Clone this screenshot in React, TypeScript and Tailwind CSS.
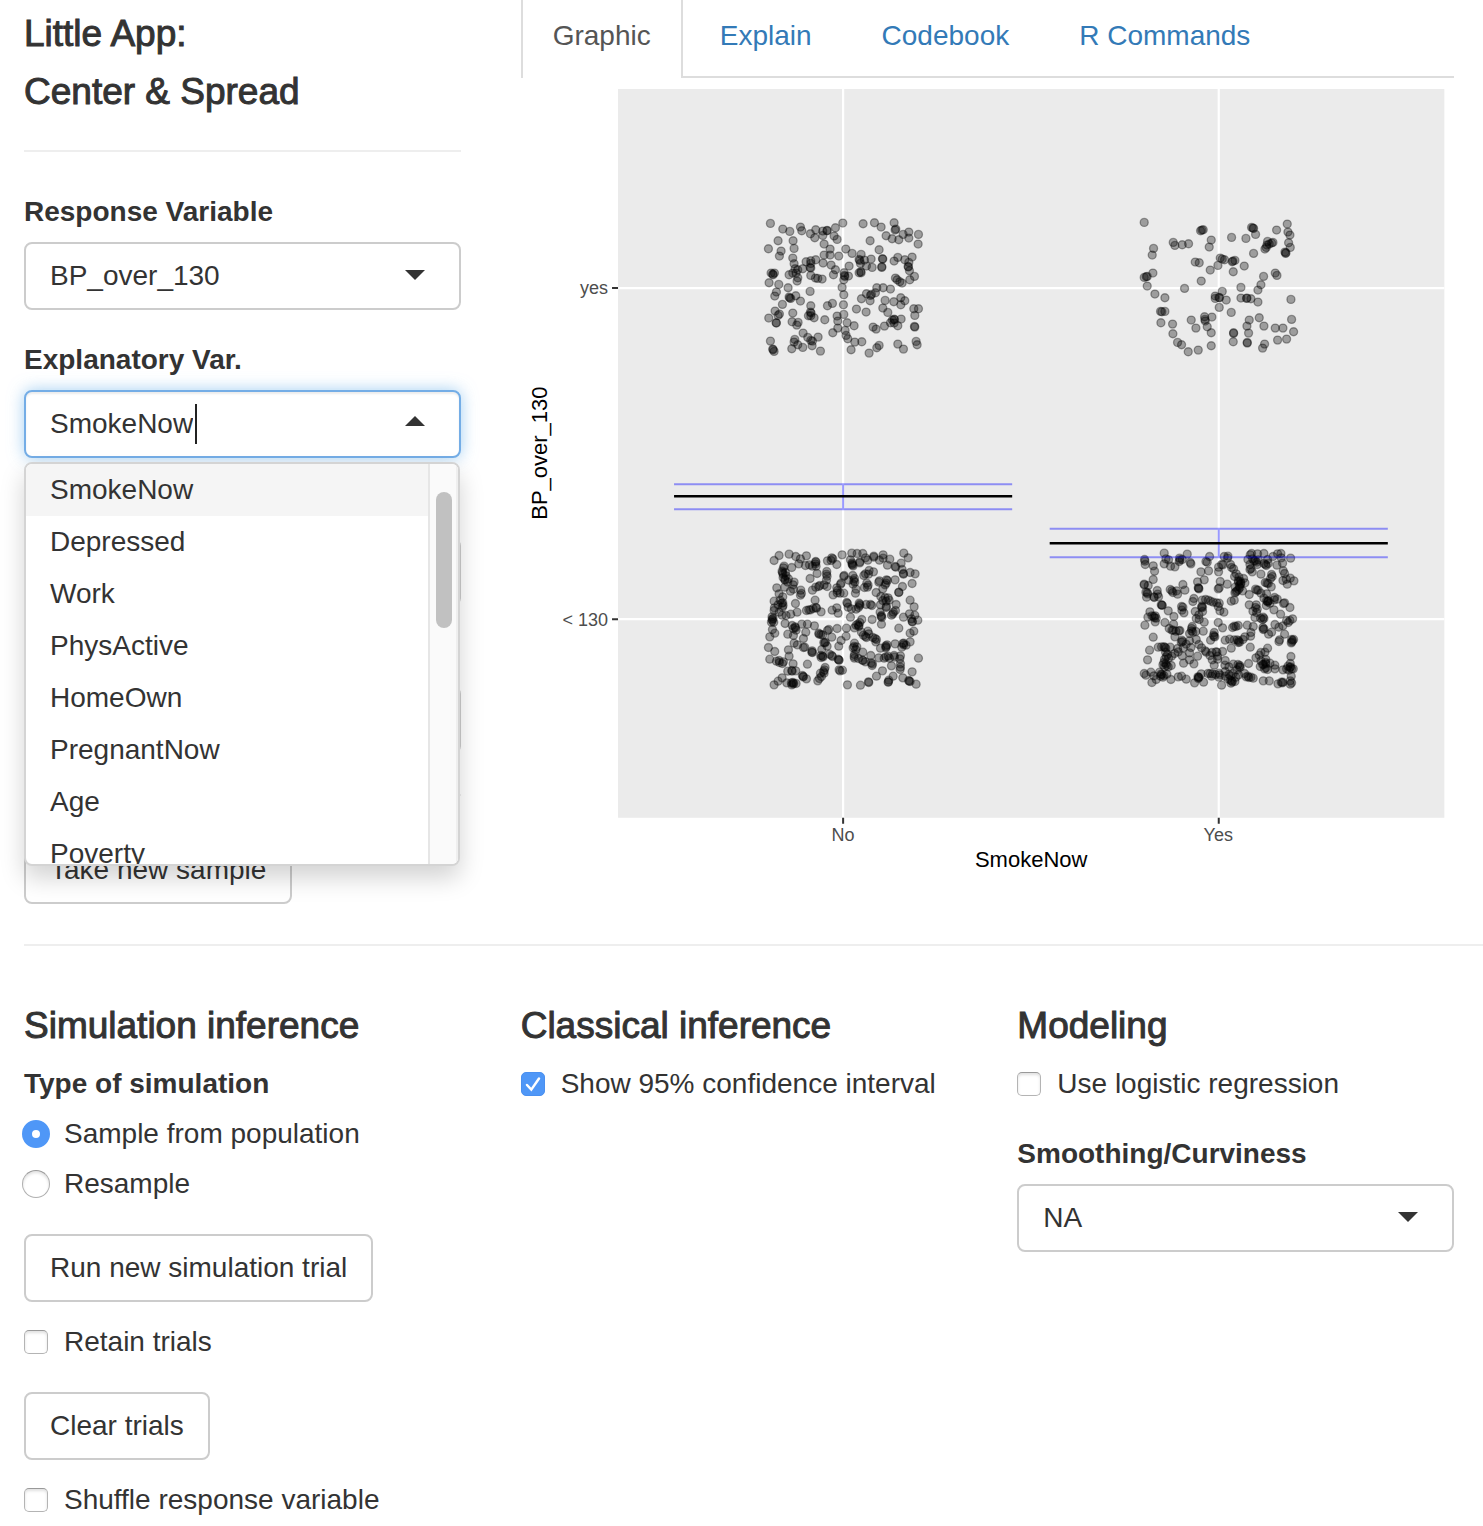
import { useId, useState, type ReactNode } from "react";

// Jittered observations, in thirds of a chart unit from each cluster's corner.
const noHigh =
  "61,55 98,72 119,79 151,66 155,77 181,86 197,74 194,98 218,78 218,91 231,76 231,77 256,68 278,54 252,93 261,103 222,117 240,132 84,107 129,107 132,130 55,131 93,138 88,153 128,159 132,176 287,132 306,145 339,56 373,53 393,66 432,53 437,72 435,75 360,107 387,134 408,92 426,101 446,104 459,88 476,81 476,99 505,88 504,117 222,150 240,150 266,153 197,164 168,170 182,167 182,175 180,187 182,189 219,174 243,180 256,194 250,209 297,183 333,148 327,163 329,166 343,165 331,175 363,162 349,183 366,187 397,161 398,162 395,185 395,187 432,168 443,157 464,164 486,156 476,172 474,184 475,186 478,197 493,214 479,224 63,204 68,207 69,209 73,204 57,233 86,238 79,261 74,273 114,248 117,209 128,204 135,191 138,204 143,194 143,218 141,228 158,191 182,211 196,219 203,220 216,222 282,203 283,211 284,214 295,213 281,224 327,203 332,200 333,203 436,219 441,224 449,230 456,234 276,247 281,269 380,248 399,248 421,252 180,259 97,298 117,276 119,279 122,280 137,272 151,288 349,266 334,281 361,271 364,268 376,263 360,287 280,299 405,286 431,290 452,278 464,287 452,299 182,302 232,302 247,295 319,312 348,321 398,309 413,322 491,311 505,311 494,331 75,318 88,327 84,331 56,339 78,353 79,354 128,324 126,350 144,352 140,360 175,332 181,321 183,324 182,332 192,338 224,344 281,328 261,333 263,348 291,353 312,362 263,369 248,383 285,376 288,391 293,401 427,345 432,342 433,344 421,353 432,354 453,342 443,362 403,363 369,366 378,372 493,364 494,366 61,408 68,432 69,434 72,439 159,384 173,397 182,406 187,408 186,422 204,396 134,403 132,411 143,419 125,431 158,427 211,438 314,411 335,410 303,434 357,444 380,428 387,421 443,417 460,432 498,409 501,419";

const yesHigh =
  "42,52 211,77 215,75 219,74 243,105 237,126 304,97 347,100 364,67 368,69 370,70 376,88 439,75 471,57 473,81 479,90 475,113 480,127 464,141 466,145 467,143 370,145 412,109 410,120 417,117 424,114 428,112 404,132 408,127 129,112 134,121 156,119 175,116 70,130 66,150 195,171 207,173 270,159 276,162 283,164 263,181 240,195 306,170 308,168 314,166 309,200 342,183 68,204 42,217 48,215 51,214 51,243 213,228 163,250 74,267 104,278 91,319 95,320 104,319 92,353 127,357 400,214 435,204 440,211 392,239 383,255 332,247 276,259 255,273 255,280 266,277 268,278 288,285 267,307 303,322 332,279 349,280 350,279 362,281 383,291 482,283 183,345 223,335 224,343 245,336 225,348 231,365 197,369 243,383 128,386 142,412 154,419 174,440 204,435 243,422 310,383 310,385 309,410 351,412 351,414 355,384 350,363 357,345 387,338 401,363 435,369 458,369 484,343 490,380 469,402 442,405 403,417 397,429";

const noLow =
  "72,61 87,46 117,42 137,49 151,56 169,47 146,71 166,76 178,74 187,78 125,82 102,78 197,64 197,66 196,71 198,78 232,62 245,53 248,56 243,61 260,73 276,44 305,39 321,40 338,40 301,59 306,68 306,72 307,74 309,77 329,65 329,68 346,53 353,60 371,48 371,51 388,60 399,44 399,54 419,57 412,75 435,79 437,81 453,69 461,39 474,53 456,88 460,100 460,102 480,97 495,101 486,130 100,83 96,93 97,97 99,102 106,97 108,107 99,112 104,117 105,120 115,116 113,126 132,126 129,134 104,141 80,143 180,115 201,100 230,94 229,102 231,108 229,120 222,134 209,136 206,139 231,139 197,141 187,150 152,150 154,160 151,165 130,147 121,153 87,161 98,170 195,180 136,190 282,106 281,109 308,106 313,115 311,121 314,126 309,132 296,120 273,129 271,133 260,143 262,151 261,158 249,164 270,159 281,159 318,147 316,159 341,106 346,101 357,91 355,102 370,95 350,129 354,135 352,141 343,142 388,122 386,126 409,119 412,121 405,134 408,129 435,119 398,146 378,157 457,139 446,156 446,157 392,169 414,173 405,172 72,183 90,180 98,188 95,189 84,194 99,196 97,201 73,203 72,211 87,216 66,230 69,235 66,237 67,241 64,246 71,246 96,225 108,226 122,222 141,216 105,250 169,211 176,209 181,209 189,205 198,202 199,204 213,215 246,210 260,203 264,219 290,187 292,190 294,201 304,206 318,207 327,189 329,192 329,196 325,202 348,193 361,193 365,196 391,194 398,181 408,183 417,180 409,199 408,202 438,193 436,211 430,216 428,221 424,225 390,216 394,226 393,229 395,232 366,238 394,252 301,231 335,238 329,247 323,252 326,256 326,259 313,263 318,255 480,180 492,200 478,221 494,225 460,231 484,236 486,244 487,245 503,240 491,273 480,279 446,264 67,268 74,279 59,290 126,256 135,260 136,263 130,265 138,270 155,252 172,252 193,257 167,276 113,282 130,286 160,295 206,279 207,282 212,283 218,284 232,271 236,268 261,265 289,264 245,291 288,288 273,301 334,276 353,273 356,281 340,285 346,289 349,292 368,292 375,295 379,298 377,305 55,322 74,334 115,329 117,348 132,309 142,314 160,322 164,321 186,332 185,336 187,337 221,307 224,308 226,306 231,318 266,318 215,328 212,346 217,348 213,352 219,350 238,342 245,346 247,349 264,357 266,359 267,360 313,309 312,319 309,323 317,328 320,320 338,336 362,346 391,324 407,317 408,320 407,323 411,314 435,311 458,310 461,309 461,314 455,321 468,315 480,305 59,357 79,363 87,361 88,367 97,370 129,371 172,372 113,393 125,391 126,393 137,392 157,406 159,410 160,409 169,416 96,413 84,423 72,434 110,428 124,428 128,427 129,431 131,429 125,434 138,430 225,382 223,389 220,394 222,399 211,399 214,409 208,415 203,422 267,389 270,392 277,390 313,343 312,349 313,354 325,355 337,360 339,361 346,365 363,368 367,371 366,376 386,353 402,354 407,350 414,348 418,354 432,346 433,351 451,347 449,356 424,377 451,371 451,381 450,388 397,392 486,395 505,354 379,408 429,408 458,413 476,421 477,423 480,424 498,432 416,420 414,426 415,425 355,425 356,427 331,435 292,434 100,365";

const yesLow =
  "102,99 107,116 102,131 115,119 121,138 134,140 148,114 149,119 147,124 156,118 171,102 180,127 182,131 43,118 44,123 45,133 69,137 73,153 69,178 42,192 42,194 54,196 47,216 51,217 52,221 49,231 81,211 82,222 71,230 72,232 85,230 93,254 95,255 96,255 114,272 59,275 53,291 65,287 70,289 73,293 75,287 78,294 75,305 44,315 69,351 104,307 120,208 125,212 128,217 139,212 142,222 158,193 164,210 131,289 130,312 235,152 231,126 238,109 227,124 212,155 222,179 202,185 204,203 205,204 206,206 282,109 293,108 292,114 265,141 274,133 278,134 265,155 270,184 267,203 264,206 291,192 301,133 304,142 310,146 318,161 313,169 326,171 324,182 325,186 330,183 332,188 331,192 327,197 329,202 325,208 320,212 317,215 337,212 314,218 340,175 344,188 315,201 360,104 353,118 364,100 367,116 371,122 375,122 379,126 359,133 362,145 359,148 366,155 382,101 384,119 381,133 392,162 401,100 412,118 401,130 406,133 408,136 414,130 428,109 442,101 452,100 453,113 457,129 440,135 481,114 459,152 463,160 424,163 426,169 421,175 458,181 468,177 480,174 491,182 471,192 405,187 410,189 414,190 423,200 357,223 376,207 380,210 384,210 392,219 303,243 312,240 191,235 188,244 216,240 226,238 234,240 241,243 249,246 259,248 267,249 264,259 269,272 281,276 215,258 214,261 217,262 217,274 206,284 198,295 207,298 222,306 154,259 158,261 155,270 161,278 195,274 357,254 378,254 376,262 381,267 368,273 379,277 409,221 401,234 409,242 413,243 412,245 415,242 419,249 433,232 441,237 432,239 408,256 431,269 463,248 460,250 479,262 451,282 374,292 391,294 399,291 401,295 397,298 487,296 479,301 469,301 474,307 458,317 446,321 434,313 398,322 401,326 399,328 415,342 424,336 264,307 277,323 307,322 312,318 317,319 324,316 351,315 369,319 362,337 361,348 117,325 125,330 129,330 137,333 146,332 149,331 134,350 186,319 184,325 184,332 188,336 178,340 197,334 198,358 219,333 155,360 153,366 157,364 168,372 178,362 252,337 250,345 251,349 254,350 241,360 285,360 298,357 312,359 321,359 325,362 324,367 328,366 338,358 344,350 463,342 448,359 446,364 484,358 487,361 485,365 490,358 483,368 58,390 52,419 84,381 94,380 101,380 104,381 107,384 120,381 142,385 106,396 112,403 108,410 103,417 115,414 124,408 133,400 144,395 101,427 107,430 98,434 109,436 114,440 123,436 103,440 159,383 182,382 156,407 178,398 202,408 178,419 160,429 191,431 206,373 214,383 225,392 228,396 239,406 245,397 257,395 260,396 277,394 303,384 360,381 412,384 404,396 392,397 387,405 377,413 262,408 262,417 246,419 252,435 285,421 284,435 296,440 309,432 323,433 329,436 327,440 330,441 320,449 355,430 392,422 407,418 406,427 397,433 390,439 400,433 407,431 419,429 407,443 403,446 412,448 434,435 434,446 458,449 482,409 480,430 473,438 479,442 481,440 469,446 484,446 489,446 476,450 42,460 62,456 47,465 71,467 65,487 78,478 88,456 92,462 95,463 91,468 98,471 101,466 110,462 122,478 144,470 154,468 168,477 203,470 205,472 206,471 204,475 193,488 220,486 213,461 233,460 240,460 247,461 244,468 256,463 266,459 269,464 266,471 285,454 296,463 309,460 301,467 285,468 293,476 301,480 305,483 306,485 302,489 314,484 317,471 325,464 274,495 348,470 353,468 356,472 369,474 343,460 362,471 399,482 417,482 443,491 453,486 456,488 458,486 483,468 480,482 484,488 480,492";

function Cluster({ x, y, points }: { x: number; y: number; points: string }) {
  return (
    <g transform={`translate(${x} ${y}) scale(0.3333)`}>
      {points.split(" ").map((point, i) => {
        const [cx, cy] = point.split(",");
        return <circle key={i} cx={cx} cy={cy} r="12" />;
      })}
    </g>
  );
}

function Interval({ x, low, mean, high }: { x: number; low: number; mean: number; high: number }) {
  return (
    <g>
      <g stroke="#0000ff" strokeOpacity="0.4" strokeWidth="2" fill="none">
        <path d={`M${x - 169} ${high}h338M${x - 169} ${low}h338M${x} ${high}V${low}`} />
      </g>
      <path d={`M${x - 169} ${mean}h338`} stroke="#000" strokeWidth="2.5" />
    </g>
  );
}

function Chart() {
  return (
    <svg
      viewBox="521 78 933 800"
      className="block w-full font-['Liberation_Sans',Arial,sans-serif]"
      role="img"
      aria-label="BP_over_130 by SmokeNow"
    >
      <rect x="618" y="89" width="826" height="728.5" fill="#ebebeb" />
      <path d="M843 89V817.5M1218.5 89V817.5M618 288H1444M618 619H1444" stroke="#fff" strokeWidth="2.2" />
      <path d="M612 288h6M612 619h6M843 817.5v6M1218.5 817.5v6" stroke="#333" strokeWidth="2" />
      <g fill="#000" fillOpacity="0.33" stroke="#000" strokeOpacity="0.35" strokeWidth="4">
        <Cluster x={750} y={205} points={noHigh} />
        <Cluster x={1130} y={205} points={yesHigh} />
        <Cluster x={750} y={540} points={noLow} />
        <Cluster x={1130} y={520} points={yesLow} />
      </g>
      <Interval x={843} high={484} mean={496} low={509} />
      <Interval x={1218.5} high={528.5} mean={543} low={557} />
      <g fill="#4d4d4d" fontSize="18">
        <text x="608" y="294" textAnchor="end">yes</text>
        <text x="608" y="626" textAnchor="end">&lt; 130</text>
        <text x="843" y="841" textAnchor="middle">No</text>
        <text x="1218" y="841" textAnchor="middle">Yes</text>
      </g>
      <g fill="#000" fontSize="22" textAnchor="middle">
        <text x="1031" y="867">SmokeNow</text>
        <text transform="translate(547 453) rotate(-90)">BP_over_130</text>
      </g>
    </svg>
  );
}

function Caret({ up = false }: { up?: boolean }) {
  return (
    <svg
      viewBox="0 0 20 14"
      className="pointer-events-none absolute top-[26px] right-9 h-[14px] w-5 fill-[#333]"
      aria-hidden="true"
    >
      <path d={up ? "M0 10L10 0L20 10Z" : "M0 2H20L10 12Z"} />
    </svg>
  );
}

function SelectBox({ id, label, options }: { id?: string; label?: string; options: string[] }) {
  return (
    <div className="relative">
      <select
        id={id}
        aria-label={label}
        className="block h-[68px] w-full appearance-none rounded-lg border-2 border-[#ccc] bg-white px-6 leading-10 outline-none"
      >
        {options.map((option) => (
          <option key={option}>{option}</option>
        ))}
      </select>
      <Caret />
    </div>
  );
}

function Field({ label, options }: { label: string; options: string[] }) {
  const id = useId();
  return (
    <div>
      <label htmlFor={id} className="mb-[10px] block font-bold">{label}</label>
      <SelectBox id={id} options={options} />
    </div>
  );
}

const variables = ["SmokeNow", "Depressed", "Work", "PhysActive", "HomeOwn", "PregnantNow", "Age", "Poverty"];

function VariablePicker() {
  const [value, setValue] = useState("SmokeNow");
  return (
    <div>
      <label htmlFor="explanatory" className="mb-[10px] block font-bold">Explanatory Var.</label>
      <div className="relative">
        <div className="flex h-[68px] items-center rounded-lg border-2 border-[#74ade6] bg-white px-6 shadow-[inset_0_2px_2px_rgba(0,0,0,0.075),0_0_16px_rgba(102,175,233,0.6)]">
          <input
            id="explanatory"
            role="combobox"
            aria-expanded="true"
            aria-controls="explanatory-options"
            value={value}
            onChange={(event) => setValue(event.target.value)}
            className="field-sizing-content h-10 bg-transparent p-0 leading-10 outline-none"
          />
          <span className="ml-[2px] h-10 w-[2px] bg-[#222]" />
        </div>
        <Caret up />
        <div className="absolute top-full right-px left-0 z-10 mt-1 flex h-[404px] overflow-hidden rounded-lg border-2 border-[#d4d4d4] bg-white shadow-[0_12px_24px_rgba(0,0,0,0.175)]">
          <ul id="explanatory-options" role="listbox" className="grow overflow-hidden">
            {variables.map((name) => (
              <li
                key={name}
                role="option"
                aria-selected={name === value}
                onClick={() => setValue(name)}
                className="px-6 py-[6px] aria-selected:bg-[#f5f5f5]"
              >
                {name}
              </li>
            ))}
          </ul>
          <div className="w-[30px] border-r-2 border-l-2 border-r-[#efefef] border-l-[#e6e6e6] bg-[#fafafa] px-[6px] pt-7">
            <div className="h-[136px] w-4 rounded-full bg-[#c1c1c1]" />
          </div>
        </div>
      </div>
    </div>
  );
}

function Check({ label, checked = false }: { label: string; checked?: boolean }) {
  return (
    <label className="flex items-center gap-4">
      <span className="relative size-6 shrink-0">
        <input
          type="checkbox"
          defaultChecked={checked}
          className="peer block size-6 appearance-none rounded-[5px] border border-[#b4b4b4] border-t-[#999] bg-white shadow-[inset_0_2px_3px_rgba(0,0,0,0.12)] checked:border-[#4a90f0] checked:bg-[#4f97f7] checked:shadow-none"
        />
        <svg
          viewBox="0 0 24 24"
          className="pointer-events-none absolute inset-0 hidden size-6 fill-none stroke-white stroke-[2.5px] peer-checked:block"
          aria-hidden="true"
        >
          <path d="M6 13L10.3 17.6L18 6.5" strokeLinecap="round" />
        </svg>
      </span>
      {label}
    </label>
  );
}

function Radio({ label, checked = false }: { label: string; checked?: boolean }) {
  return (
    <label className="flex items-center gap-4">
      <span className="flex w-6 shrink-0 justify-center">
        <input
          type="radio"
          name="simulation"
          defaultChecked={checked}
          className="size-7 shrink-0 appearance-none rounded-full border border-[#b0b0b0] border-t-[#999] bg-white shadow-[inset_0_2px_3px_rgba(0,0,0,0.12)] checked:border-[10px] checked:border-[#4f97f7] checked:shadow-none"
        />
      </span>
      {label}
    </label>
  );
}

function Button({ children }: { children: ReactNode }) {
  return (
    <button type="button" className="block h-[68px] rounded-lg border-2 border-[#ccc] bg-white px-6 whitespace-nowrap">
      {children}
    </button>
  );
}

function Heading({ children }: { children: ReactNode }) {
  return (
    <h3 className="mb-[18px] text-[37px] leading-10 [-webkit-text-stroke:1px_#333]">{children}</h3>
  );
}

const tabs = ["Explain", "Codebook", "R Commands"];

export default function App() {
  return (
    <div className="bg-white pb-2 pl-6 font-['Liberation_Sans',Arial,sans-serif] text-[28px] leading-10 text-[#333]">
      <div className="grid grid-cols-3 gap-x-[60px] pr-[29px]">
        <aside className="pt-[14px]">
          <Heading>Little App:</Heading>
          <Heading>Center &amp; Spread</Heading>
          <hr className="mt-[38px] mb-10 border-t-2 border-[#eee]" />
          <div className="flex flex-col gap-[30px]">
            <Field label="Response Variable" options={["BP_over_130"]} />
            <VariablePicker />
            <div className="mt-[50px]">
              <SelectBox label="Covariate" options={[]} />
            </div>
            <div className="mt-[50px]">
              <SelectBox label="Sample size" options={[]} />
            </div>
          </div>
          <hr className="my-10 border-t-2 border-[#eee]" />
          <Button>Take new sample</Button>
        </aside>
        <main className="col-span-2">
          <nav className="flex">
            <a href="#graphic" className="border-x-2 border-[#ddd] px-[30px] pt-4 pb-[22px] text-[#555]">
              Graphic
            </a>
            <div className="flex grow gap-[6px] border-b-2 border-[#ddd] pl-[5px]">
              {tabs.map((tab) => (
                <a key={tab} href="#" className="px-8 pt-4 pb-5 text-[#337ab7]">
                  {tab}
                </a>
              ))}
            </div>
          </nav>
          <Chart />
        </main>
      </div>
      <hr className="mt-10 mb-[60px] border-t-2 border-[#eee]" />
      <div className="grid grid-cols-3 gap-x-[60px] pr-[29px]">
        <section>
          <Heading>Simulation inference</Heading>
          <fieldset className="mb-[30px] flex flex-col gap-[10px]">
            <legend className="mb-[10px] font-bold">Type of simulation</legend>
            <Radio label="Sample from population" checked />
            <Radio label="Resample" />
          </fieldset>
          <Button>Run new simulation trial</Button>
          <div className="mt-5 mb-[30px]">
            <Check label="Retain trials" />
          </div>
          <Button>Clear trials</Button>
          <div className="mt-5">
            <Check label="Shuffle response variable" />
          </div>
        </section>
        <section>
          <Heading>Classical inference</Heading>
          <Check label="Show 95% confidence interval" checked />
        </section>
        <section>
          <Heading>Modeling</Heading>
          <div className="mb-[30px]">
            <Check label="Use logistic regression" />
          </div>
          <Field label="Smoothing/Curviness" options={["NA"]} />
        </section>
      </div>
    </div>
  );
}
